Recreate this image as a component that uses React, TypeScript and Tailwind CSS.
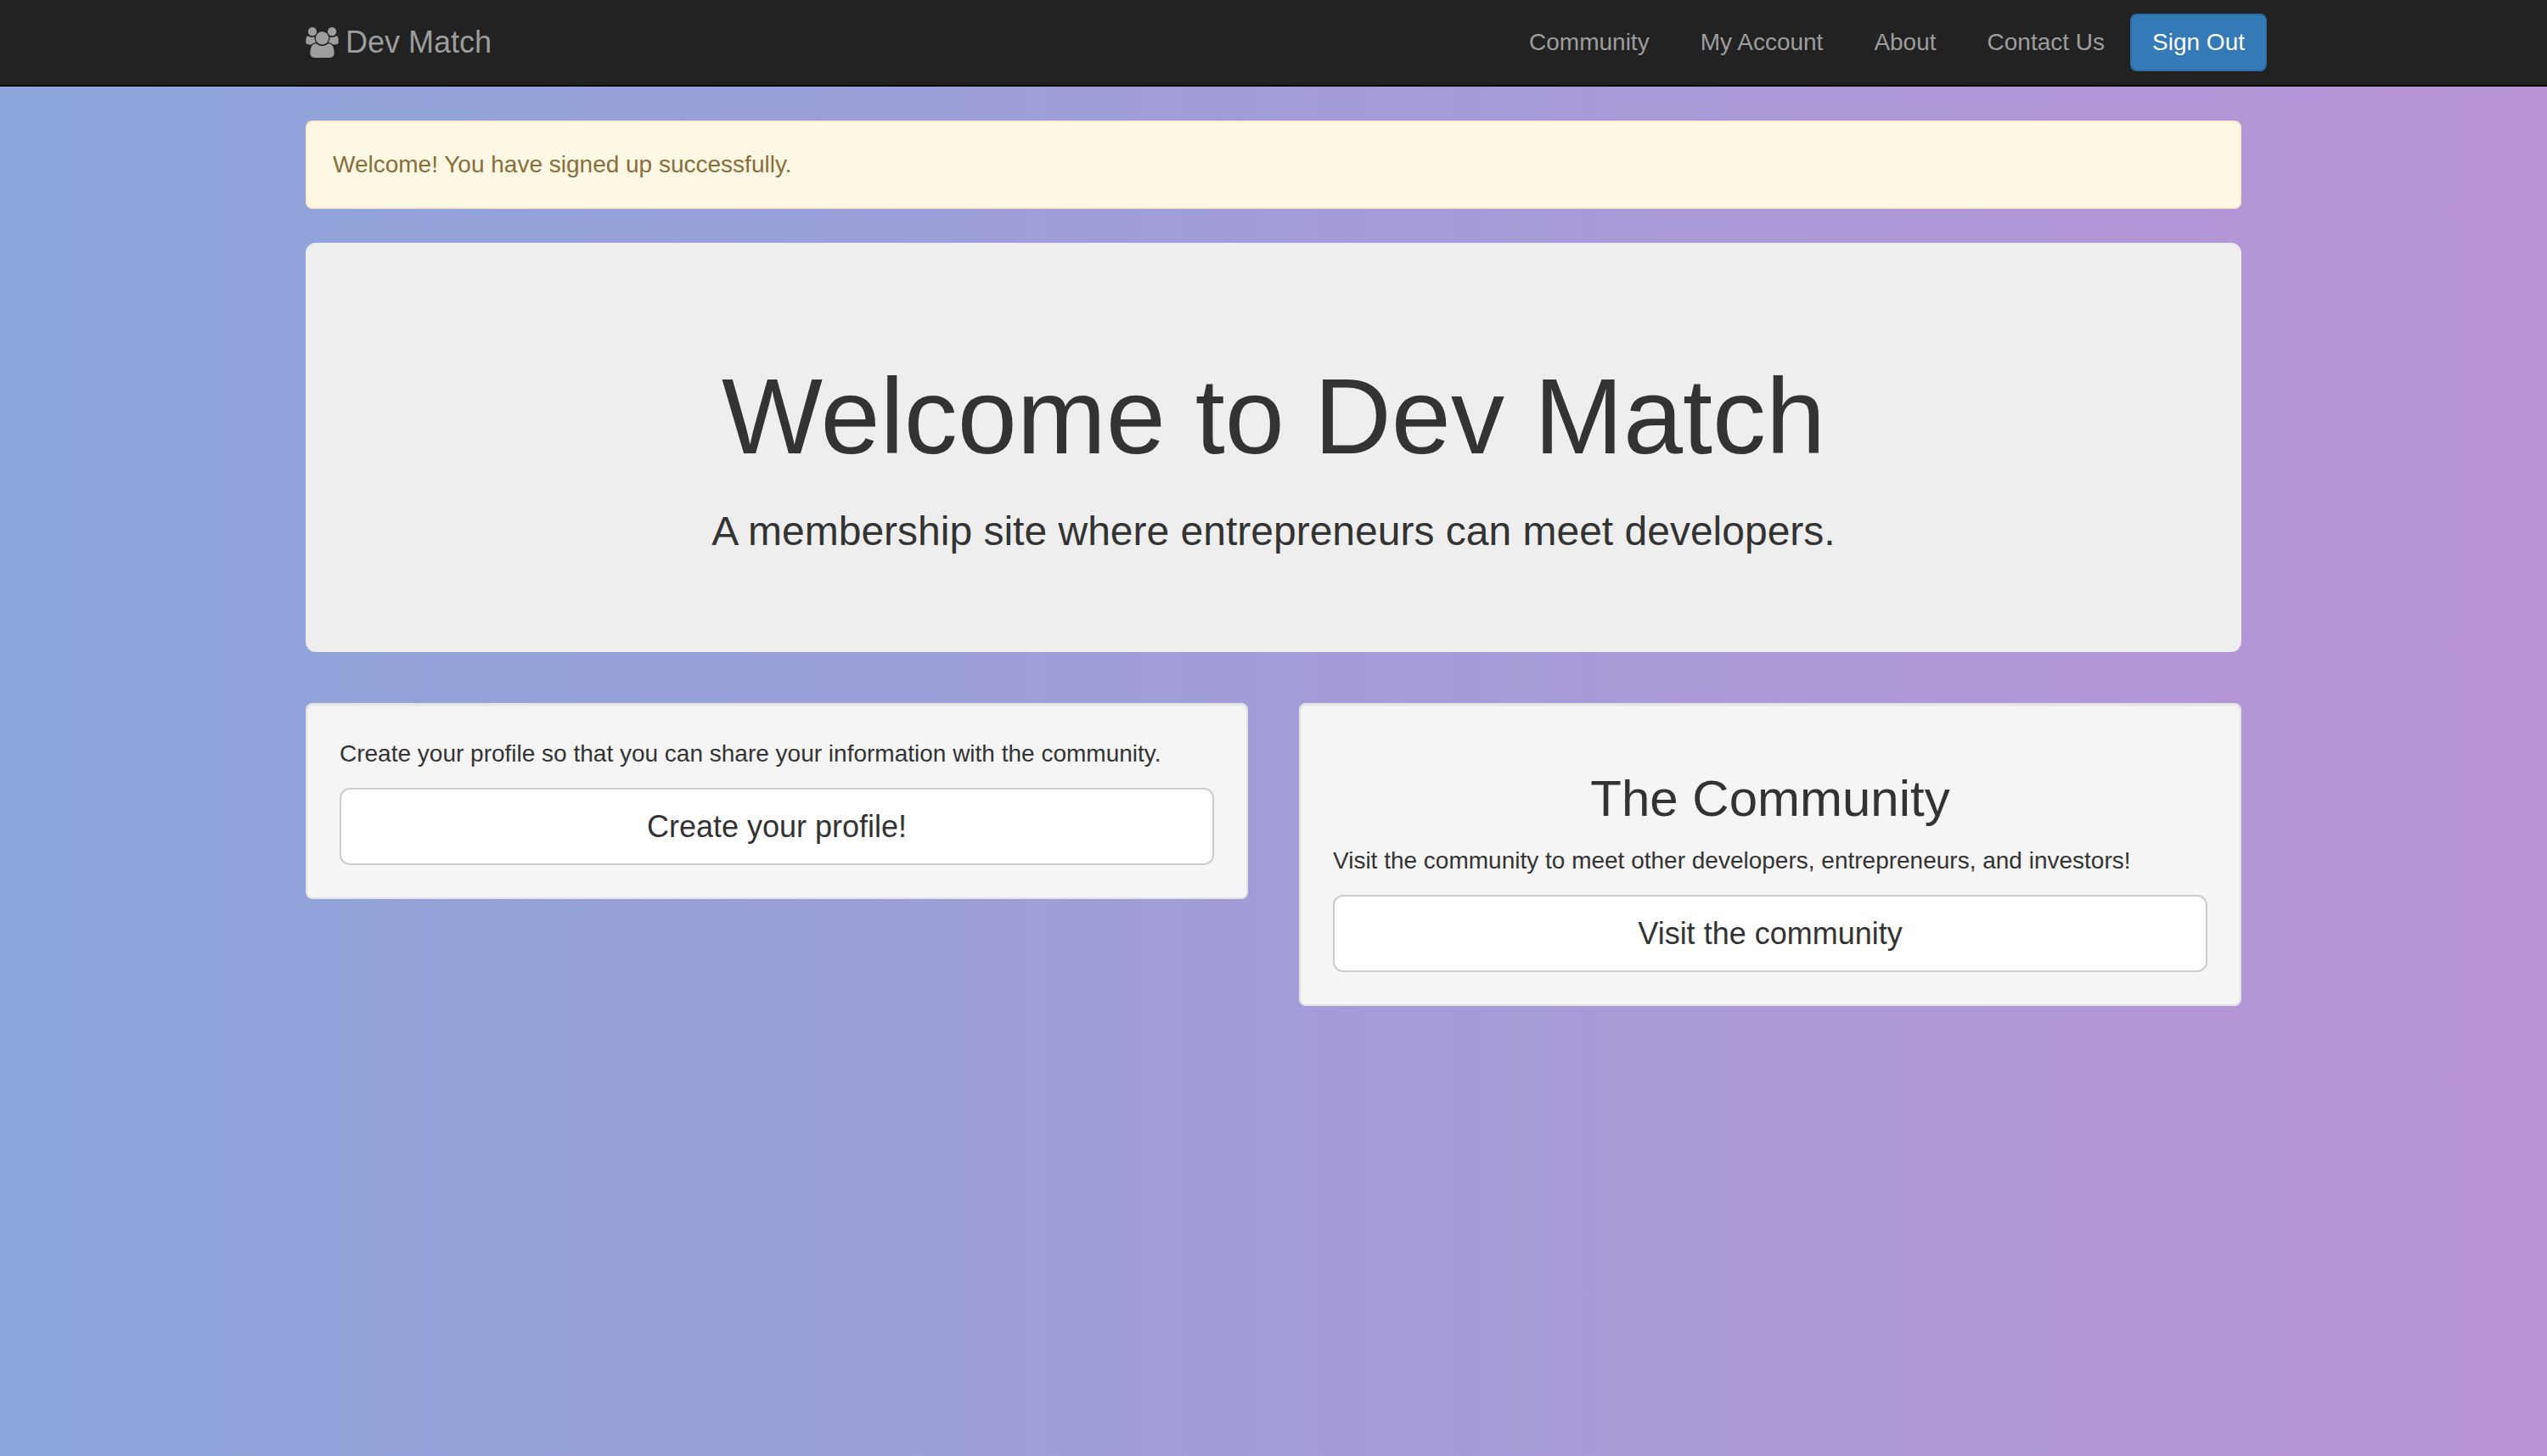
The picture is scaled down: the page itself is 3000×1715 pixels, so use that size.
import React from "react";

const navLinks = ["Community", "My Account", "About", "Contact Us"];

function UsersIcon() {
  return (
    <svg viewBox="0 0 1920 1792" className="h-9 w-[39px] fill-current" aria-hidden="true">
      <path d="M593 896q-162 5-265 128h-134q-82 0-138-40.5t-56-118.5q0-353 124-353 6 0 43.5 21t97.5 42.5 119 21.5q67 0 133-23-5 37-5 66 0 139 81 256zm1071 637q0 120-73 189.5t-194 69.5h-874q-121 0-194-69.5t-73-189.5q0-53 3.5-103.5t14-109 26.5-108.5 43-97.5 62-81 85.5-53.5 111.5-20q10 0 43 21.5t73 48 107 48 135 21.5 135-21.5 107-48 73-48 43-21.5q61 0 111.5 20t85.5 53.5 62 81 43 97.5 26.5 108.5 14 109 3.5 103.5zm-1024-1277q0 106-75 181t-181 75-181-75-75-181 75-181 181-75 181 75 75 181zm704 384q0 159-112.5 271.5t-271.5 112.5-271.5-112.5-112.5-271.5 112.5-271.5 271.5-112.5 271.5 112.5 112.5 271.5zm576 225q0 78-56 118.5t-138 40.5h-134q-103-123-265-128 81-117 81-256 0-29-5-66 66 23 133 23 59 0 119-21.5t97.5-42.5 43.5-21q124 0 124 353zm-128-609q0 106-75 181t-181 75-181-75-75-181 75-181 181-75 181 75 75 181z" />
    </svg>
  );
}

function Navbar() {
  return (
    <header className="border-b-2 border-[#080808] bg-[#222222] text-[#9d9d9d]">
      <div className="mx-auto flex max-w-[2340px] items-center justify-between pl-[30px]">
        <a href="#home" className="flex items-center gap-2 py-[30px] text-[36px] leading-[40px]">
          <UsersIcon />
          Dev Match
        </a>
        <nav className="flex items-center">
          {navLinks.map((label) => (
            <a key={label} href="#nav" className="p-[30px]">
              {label}
            </a>
          ))}
          <button
            type="button"
            className="rounded-lg border-2 border-[#2e6da4] bg-[#337ab7] px-6 py-3 text-white"
          >
            Sign Out
          </button>
        </nav>
      </div>
    </header>
  );
}

function Well({ title, text, action }: { title?: string; text: string; action: string }) {
  return (
    <section className="rounded-lg border-2 border-[#e3e3e3] bg-[#f5f5f5] p-[38px] shadow-[inset_0_2px_2px_rgba(0,0,0,0.05)]">
      {title && <h2 className="mt-10 mb-5 text-center text-[60px] leading-[66px]">{title}</h2>}
      <p className="mb-5">{text}</p>
      <a
        href="#action"
        className="block rounded-xl border-2 border-[#cccccc] bg-white px-8 py-5 text-center text-[36px] leading-[47px]"
      >
        {action}
      </a>
    </section>
  );
}

export default function App() {
  return (
    <div className="min-h-screen bg-[linear-gradient(to_right,#8ca6db,#b993d6)] font-['Liberation_Sans',Arial,sans-serif] text-[28px] leading-[40px] text-[#333333]">
      <Navbar />
      <main className="mx-auto max-w-[2340px] px-[30px] pt-10 pb-10">
        <div
          role="alert"
          className="rounded-lg border-2 border-[#faebcc] bg-[#fcf8e3] p-[30px] text-[#8a6d3b]"
        >
          Welcome! You have signed up successfully.
        </div>
        <section className="mt-10 rounded-xl bg-[#eeeeee] px-[120px] pt-[136px] pb-[116px] text-center">
          <h1 className="text-[126px] leading-[138px]">Welcome to Dev Match</h1>
          <h3 className="mt-10 text-[48px] leading-[52px]">
            A membership site where entrepreneurs can meet developers.
          </h3>
        </section>
        <div className="mt-[60px] grid grid-cols-2 items-start gap-[60px]">
          <Well
            text="Create your profile so that you can share your information with the community."
            action="Create your profile!"
          />
          <Well
            title="The Community"
            text="Visit the community to meet other developers, entrepreneurs, and investors!"
            action="Visit the community"
          />
        </div>
      </main>
    </div>
  );
}
